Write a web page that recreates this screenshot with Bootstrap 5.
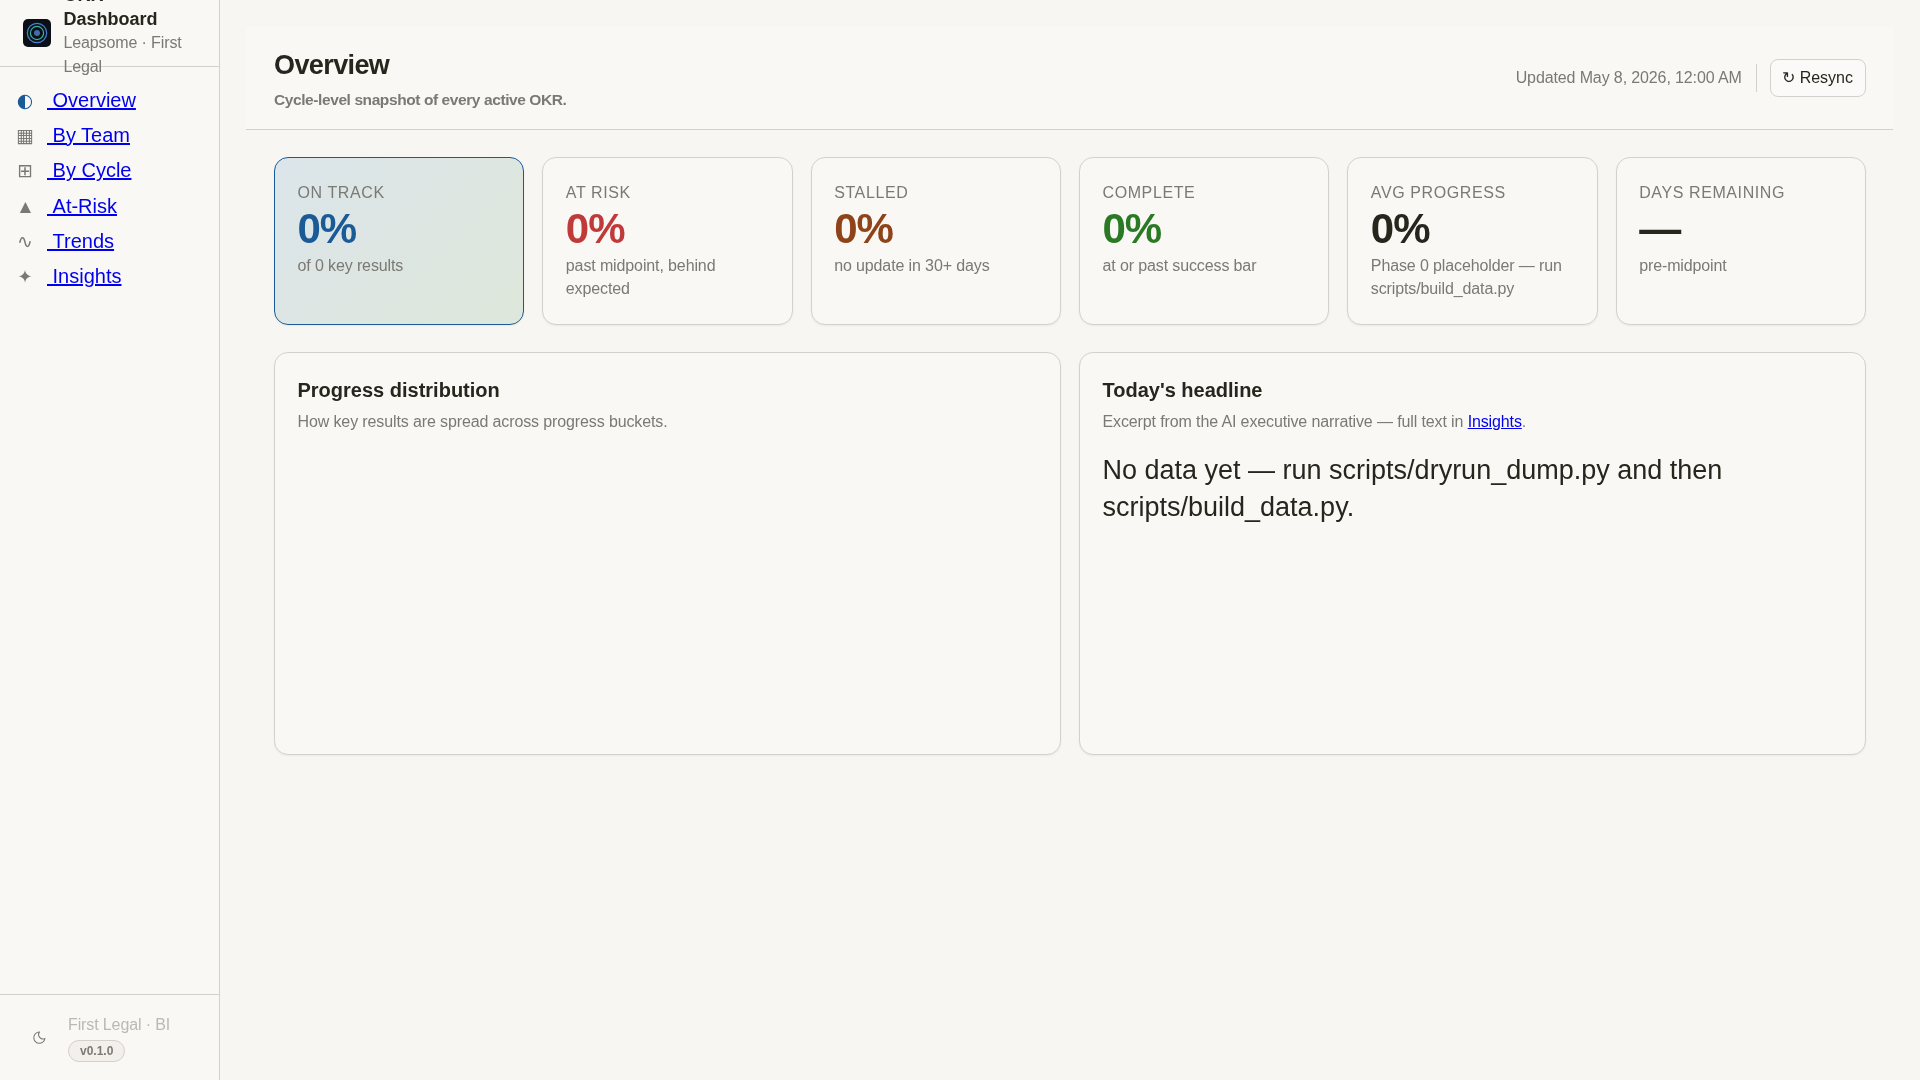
<!DOCTYPE html>
<html lang="en">
<head>
    <meta charset="UTF-8">
    <title>OKR Dashboard</title>
    <link href="https://cdn.jsdelivr.net/npm/bootstrap@5.3.3/dist/css/bootstrap.min.css" rel="stylesheet">
    <style>
        html, body { height: 100%; }
        body {
            background: #f7f6f2;
            color: #28251d;
            font-family: "Liberation Sans", Arial, sans-serif;
            font-size: 16px;
            overflow: hidden;
        }
        a { color: #0000ee; }
        .app-shell { will-change: transform; }
        .brand-sub, .foot-name, .updated, .kpi-note, .panel-sub { letter-spacing: -.12px; }
        .app-side {
            width: 220px;
            height: 1080px;
            background: #f9f8f5;
            border-right: 1px solid #d4d1ca;
        }
        .side-brand {
            height: 67px;
            padding: 0 20px 0 23px;
            border-bottom: 1px solid #d4d1ca;
        }
        .brand-logo { width: 28px; height: 28px; flex: none; }
        .brand-text { line-height: 24px; margin: -5px 0 0 .5px; }
        .brand-name { font-size: 18px; font-weight: 700; line-height: 24px; }
        .brand-sub { color: #7a7974; }
        .side-nav { padding: 15.5px 0 0 16px; }
        .side-item { height: 35.4px; font-size: 20px; line-height: 35.4px; }
        .side-icon { width: 18px; margin-right: 13px; color: #7a7974; font-family: "DejaVu Sans", sans-serif; font-size: 19px; text-align: center; }
        .side-icon.on { color: #1a5a96; }
        .side-icon.narrow { font-size: 18.5px; }
        .side-icon.tri { font-family: "Liberation Sans", sans-serif; font-size: 19px; }
        .side-foot {
            height: 86px;
            padding: 0 16px 0 33px;
            border-top: 1px solid #d4d1ca;
        }
        .moon { width: 13px; height: 13px; margin-right: 22px; color: #7a7974; flex: none; }
        .foot-name { color: #bab9b4; line-height: 22px; margin-bottom: 2px; }
        .ver-pill {
            display: inline-block;
            padding: 0 11px;
            height: 22px;
            line-height: 20px;
            font-size: 12px;
            font-weight: 700;
            color: #7a7974;
            background: #f3f0ec;
            border: 1px solid #d4d1ca;
            border-radius: 11px;
        }
        .app-main { padding: 27px 27px 0 26px; min-width: 0; }
        .top-head {
            height: 103px;
            padding: 0 27px 0 28px;
            background: #f9f8f5;
            border-bottom: 1px solid #d4d1ca;
        }
        .top-title { font-size: 27px; font-weight: 700; letter-spacing: -.6px; margin: 3px 0 6px; line-height: 36px; }
        .top-sub { font-weight: 700; font-size: 15.5px; color: #7a7974; letter-spacing: -.41px; line-height: 22px; margin-bottom: 2px; }
        .updated { color: #7a7974; }
        .v-rule { width: 1px; height: 28px; background: #d4d1ca; margin: 0 13px 0 14px; }
        .resync {
            height: 38px;
            padding: 0 12px 0 11.5px;
            font-size: 16px;
            color: #28251d;
            background: #fbfaf8;
            border: 1px solid #d4d1ca;
            border-radius: 8px;
        }
        .stage { padding: 27px 27px 0 28px; }
        .kpi-grid { display: grid; grid-template-columns: repeat(6, 1fr); gap: 18px; }
        .kpi {
            height: 168px;
            padding: 25px 23px 23px 22.5px;
            background: #f9f8f5;
            border: 1px solid #d4d1ca;
            border-radius: 14px;
            box-shadow: 0 1px 2px rgba(40,37,29,.06);
        }
        .kpi.hero {
            background: linear-gradient(135deg, #dce5ea, #dde7da);
            border-color: #1a5a96;
        }
        .kpi-label { font-size: 16px; color: #7a7974; letter-spacing: .6px; text-transform: uppercase; line-height: 20px; }
        .kpi-value { font-size: 42px; font-weight: 700; line-height: 50px; letter-spacing: -1px; margin-top: 1px; }
        .kpi-note { color: #7a7974; line-height: 23px; }
        .c-blue { color: #1a5a96; }
        .c-red { color: #c03a3a; }
        .c-brown { color: #8f4319; }
        .c-green { color: #2a7a25; }
        .panel-grid { display: grid; grid-template-columns: repeat(2, 1fr); gap: 18px; margin-top: 27px; }
        .panel {
            height: 403px;
            padding: 23px 23px 23px 22.5px;
            background: #f9f8f5;
            border: 1px solid #d4d1ca;
            border-radius: 14px;
            box-shadow: 0 1px 2px rgba(40,37,29,.06);
        }
        .panel-title { font-size: 20px; font-weight: 700; line-height: 28px; margin: 0 0 6px; }
        .panel-sub { color: #7a7974; line-height: 23px; }
        .panel-body-text { font-size: 27px; line-height: 37px; margin-top: 19px; }
    </style>
</head>
<body>
<div class="app-shell d-flex">
    <aside class="app-side d-flex flex-column flex-shrink-0">
        <div class="side-brand d-flex align-items-center gap-2">
            <svg class="brand-logo me-1" viewBox="0 0 28 28">
                <rect width="28" height="28" rx="5" fill="#0b1018"/>
                <circle cx="14" cy="14" r="9.7" fill="none" stroke="#4a7fd6" stroke-width="1.2"/>
                <circle cx="14" cy="14" r="6.6" fill="none" stroke="#2fb89a" stroke-width="1.2"/>
                <circle cx="14" cy="14" r="3" fill="#4668ad"/>
            </svg>
            <div class="brand-text">
                <div class="brand-name">OKR Dashboard</div>
                <div class="brand-sub">Leapsome · First Legal</div>
            </div>
        </div>
        <nav class="side-nav flex-grow-1">
            <div class="side-item d-flex"><span class="side-icon on">◐</span><a href="#">&nbsp;Overview</a></div>
            <div class="side-item d-flex"><span class="side-icon">▦</span><a href="#">&nbsp;By Team</a></div>
            <div class="side-item d-flex"><span class="side-icon narrow">⊞</span><a href="#">&nbsp;By Cycle</a></div>
            <div class="side-item d-flex"><span class="side-icon tri">▲</span><a href="#">&nbsp;At-Risk</a></div>
            <div class="side-item d-flex"><span class="side-icon">∿</span><a href="#">&nbsp;Trends</a></div>
            <div class="side-item d-flex"><span class="side-icon narrow">✦</span><a href="#">&nbsp;Insights</a></div>
        </nav>
        <div class="side-foot d-flex align-items-center">
            <svg class="moon" viewBox="0 0 14 14" fill="none" stroke="currentColor" stroke-width="1.1"><path d="M6.8 1.2A6 6 0 1 0 12.8 8.2 4.8 4.8 0 0 1 6.8 1.2Z"/></svg>
            <div>
                <div class="foot-name">First Legal · BI</div>
                <span class="ver-pill">v0.1.0</span>
            </div>
        </div>
    </aside>
    <main class="app-main flex-grow-1">
        <header class="top-head d-flex align-items-center justify-content-between">
            <div>
                <h1 class="top-title">Overview</h1>
                <div class="top-sub">Cycle-level snapshot of every active OKR.</div>
            </div>
            <div class="d-flex align-items-center">
                <span class="updated">Updated May 8, 2026, 12:00 AM</span>
                <span class="v-rule"></span>
                <button class="resync" type="button">↻ Resync</button>
            </div>
        </header>
        <div class="stage">
            <div class="kpi-grid">
                <div class="kpi hero">
                    <div class="kpi-label">On Track</div>
                    <div class="kpi-value c-blue">0%</div>
                    <div class="kpi-note">of 0 key results</div>
                </div>
                <div class="kpi">
                    <div class="kpi-label">At Risk</div>
                    <div class="kpi-value c-red">0%</div>
                    <div class="kpi-note">past midpoint, behind expected</div>
                </div>
                <div class="kpi">
                    <div class="kpi-label">Stalled</div>
                    <div class="kpi-value c-brown">0%</div>
                    <div class="kpi-note">no update in 30+ days</div>
                </div>
                <div class="kpi">
                    <div class="kpi-label">Complete</div>
                    <div class="kpi-value c-green">0%</div>
                    <div class="kpi-note">at or past success bar</div>
                </div>
                <div class="kpi">
                    <div class="kpi-label">Avg Progress</div>
                    <div class="kpi-value">0%</div>
                    <div class="kpi-note">Phase 0 placeholder — run scripts/build_data.py</div>
                </div>
                <div class="kpi">
                    <div class="kpi-label">Days Remaining</div>
                    <div class="kpi-value">—</div>
                    <div class="kpi-note">pre-midpoint</div>
                </div>
            </div>
            <div class="panel-grid">
                <section class="panel">
                    <h2 class="panel-title">Progress distribution</h2>
                    <div class="panel-sub">How key results are spread across progress buckets.</div>
                </section>
                <section class="panel">
                    <h2 class="panel-title">Today's headline</h2>
                    <div class="panel-sub">Excerpt from the AI executive narrative — full text in <a href="#">Insights</a>.</div>
                    <p class="panel-body-text">No data yet — run scripts/dryrun_dump.py and then scripts/build_data.py.</p>
                </section>
            </div>
        </div>
    </main>
</div>
<script src="https://cdn.jsdelivr.net/npm/bootstrap@5.3.3/dist/js/bootstrap.bundle.min.js"></script>
</body>
</html>
